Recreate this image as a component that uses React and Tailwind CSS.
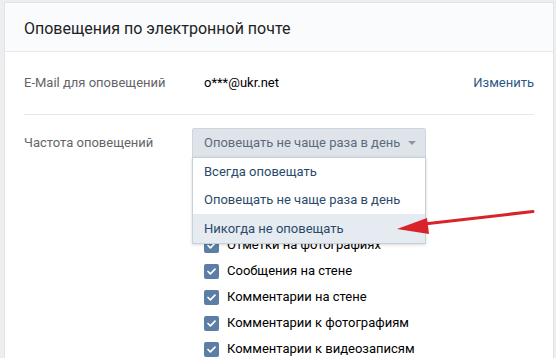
import React from "react";

const Check = ({ label }) => (
  <div className="flex items-center h-[26px]">
    <div className="w-[15px] h-[15px] rounded-[2px] bg-[#5c7ea6] flex items-center justify-center">
      <svg width="9" height="7" viewBox="0 0 9 7" fill="none">
        <path d="M1 3.5L3.4 5.8L8 1.2" stroke="white" strokeWidth="1.7" strokeLinecap="round" strokeLinejoin="round" />
      </svg>
    </div>
    <span className="ml-[8px] text-[13px] text-black">{label}</span>
  </div>
);

export default function App() {
  return (
    <div
      className="w-[556px] h-[358px] overflow-hidden bg-[#edeef0] pl-[4px] pt-[2px] pr-[2px] relative"
      style={{ fontFamily: "Roboto, 'Noto Sans', sans-serif" }}
    >
      <div className="bg-white border border-[#e1e3e6] h-[400px]">
        <div className="h-[49px] bg-[#fafbfc] border-b border-[#e7e8ec] flex items-center pl-[19px] pt-[4px]">
          <span className="text-[16px] text-[#222]">Оповещения по электронной почте</span>
        </div>
        <div className="px-[19px]">
          <div className="flex items-center h-[62px] text-[13px]">
            <div className="w-[168px] text-[#656565]">E-Mail для оповещений</div>
            <div className="pl-[12px] text-black">o***@ukr.net</div>
            <div className="ml-auto text-[#2a5885]">Изменить</div>
          </div>
          <div className="border-t border-[#e7e8ec]" />
          <div className="flex items-start pt-[13px] text-[13px]">
            <div className="w-[168px] text-[#656565] h-[30px] flex items-center">Частота оповещений</div>
            <div className="relative">
              <div className="w-[234px] h-[30px] bg-[#dfe4ea] border border-[#cdd5de] rounded-t-[2px] flex items-center pl-[11px] text-[#5c6b7a]">
                <span>Оповещать не чаще раза в день</span>
                <svg className="ml-[8px]" width="8" height="4" viewBox="0 0 8 4">
                  <path d="M0 0H8L4 4Z" fill="#8a98a8" />
                </svg>
              </div>
              <div className="absolute left-0 top-[29px] w-[234px] bg-white border border-[#c5d0db] shadow-[0_1px_3px_rgba(0,0,0,0.15)] z-10 text-[#2a4a6b]">
                <div className="h-[28px] flex items-center pl-[11px]">Всегда оповещать</div>
                <div className="h-[28px] flex items-center pl-[11px]">Оповещать не чаще раза в день</div>
                <div className="h-[29px] flex items-center pl-[11px] bg-[#e5ebf1]">Никогда не оповещать</div>
              </div>
              <div className="pl-[12px] pt-[74px]">
                <Check label="Отметки на фотографиях" />
                <Check label="Сообщения на стене" />
                <Check label="Комментарии на стене" />
                <Check label="Комментарии к фотографиям" />
                <Check label="Комментарии к видеозаписям" />
              </div>
            </div>
          </div>
        </div>
      </div>
      <svg className="absolute left-0 top-0 z-20 pointer-events-none" width="556" height="358">
        <path d="M533 211.5 L424 224" stroke="#d9232b" strokeWidth="3" strokeLinecap="round" />
        <path d="M397 229 L427 218 L429 234 Z" fill="#d9232b" />
      </svg>
    </div>
  );
}
